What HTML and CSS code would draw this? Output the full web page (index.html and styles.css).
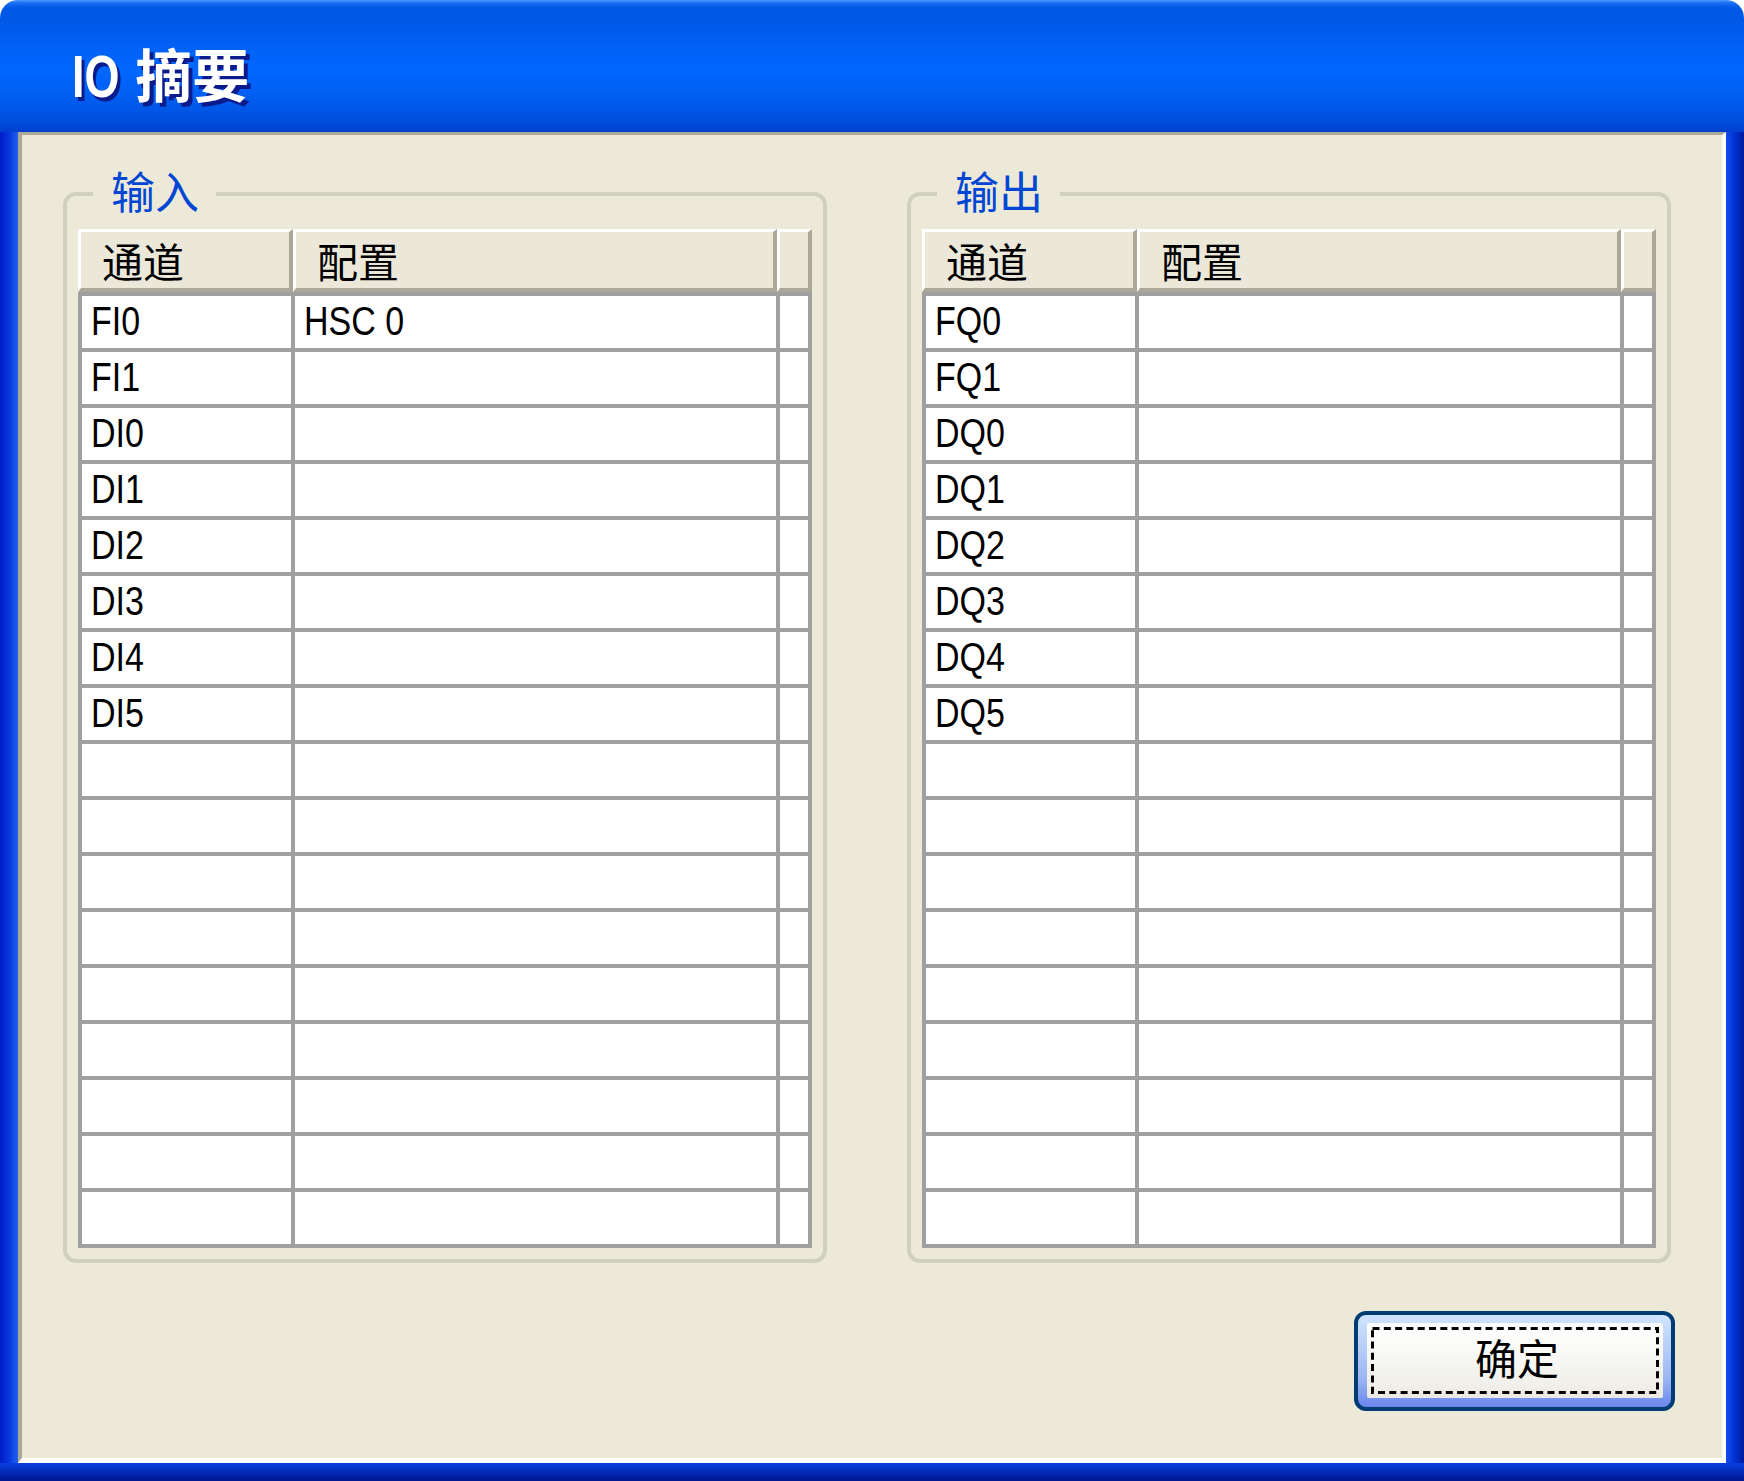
FILE: index.html
```html
<!DOCTYPE html>
<html lang="zh-CN">
<head>
<meta charset="utf-8">
<title>IO 摘要</title>
<link rel="stylesheet" href="styles.css">
</head>
<body>
<div class="window">
  <div class="titlebar">
    <h1 class="title"><span class="latin">IO</span> 摘要</h1>
  </div>
  <div class="frame">
    <div class="client">
      <div class="groups">
        <section class="group">
          <div class="legend">输入</div>
          <div class="table">
            <div class="thead">
              <div class="th">通道</div>
              <div class="th">配置</div>
              <div class="th"></div>
            </div>
            <div class="tbody">
              <div class="tr"><div class="td"><span class="txt">FI0</span></div><div class="td"><span class="txt">HSC 0</span></div><div class="td"></div></div>
              <div class="tr"><div class="td"><span class="txt">FI1</span></div><div class="td"></div><div class="td"></div></div>
              <div class="tr"><div class="td"><span class="txt">DI0</span></div><div class="td"></div><div class="td"></div></div>
              <div class="tr"><div class="td"><span class="txt">DI1</span></div><div class="td"></div><div class="td"></div></div>
              <div class="tr"><div class="td"><span class="txt">DI2</span></div><div class="td"></div><div class="td"></div></div>
              <div class="tr"><div class="td"><span class="txt">DI3</span></div><div class="td"></div><div class="td"></div></div>
              <div class="tr"><div class="td"><span class="txt">DI4</span></div><div class="td"></div><div class="td"></div></div>
              <div class="tr"><div class="td"><span class="txt">DI5</span></div><div class="td"></div><div class="td"></div></div>
              <div class="tr"><div class="td"></div><div class="td"></div><div class="td"></div></div>
              <div class="tr"><div class="td"></div><div class="td"></div><div class="td"></div></div>
              <div class="tr"><div class="td"></div><div class="td"></div><div class="td"></div></div>
              <div class="tr"><div class="td"></div><div class="td"></div><div class="td"></div></div>
              <div class="tr"><div class="td"></div><div class="td"></div><div class="td"></div></div>
              <div class="tr"><div class="td"></div><div class="td"></div><div class="td"></div></div>
              <div class="tr"><div class="td"></div><div class="td"></div><div class="td"></div></div>
              <div class="tr"><div class="td"></div><div class="td"></div><div class="td"></div></div>
              <div class="tr"><div class="td"></div><div class="td"></div><div class="td"></div></div>
            </div>
          </div>
        </section>
        <section class="group">
          <div class="legend">输出</div>
          <div class="table">
            <div class="thead">
              <div class="th">通道</div>
              <div class="th">配置</div>
              <div class="th"></div>
            </div>
            <div class="tbody">
              <div class="tr"><div class="td"><span class="txt">FQ0</span></div><div class="td"></div><div class="td"></div></div>
              <div class="tr"><div class="td"><span class="txt">FQ1</span></div><div class="td"></div><div class="td"></div></div>
              <div class="tr"><div class="td"><span class="txt">DQ0</span></div><div class="td"></div><div class="td"></div></div>
              <div class="tr"><div class="td"><span class="txt">DQ1</span></div><div class="td"></div><div class="td"></div></div>
              <div class="tr"><div class="td"><span class="txt">DQ2</span></div><div class="td"></div><div class="td"></div></div>
              <div class="tr"><div class="td"><span class="txt">DQ3</span></div><div class="td"></div><div class="td"></div></div>
              <div class="tr"><div class="td"><span class="txt">DQ4</span></div><div class="td"></div><div class="td"></div></div>
              <div class="tr"><div class="td"><span class="txt">DQ5</span></div><div class="td"></div><div class="td"></div></div>
              <div class="tr"><div class="td"></div><div class="td"></div><div class="td"></div></div>
              <div class="tr"><div class="td"></div><div class="td"></div><div class="td"></div></div>
              <div class="tr"><div class="td"></div><div class="td"></div><div class="td"></div></div>
              <div class="tr"><div class="td"></div><div class="td"></div><div class="td"></div></div>
              <div class="tr"><div class="td"></div><div class="td"></div><div class="td"></div></div>
              <div class="tr"><div class="td"></div><div class="td"></div><div class="td"></div></div>
              <div class="tr"><div class="td"></div><div class="td"></div><div class="td"></div></div>
              <div class="tr"><div class="td"></div><div class="td"></div><div class="td"></div></div>
              <div class="tr"><div class="td"></div><div class="td"></div><div class="td"></div></div>
            </div>
          </div>
        </section>
      </div>
      <div class="actions">
        <button class="btn" type="button">
          <span class="face">
            <svg class="focus" width="288" height="67" viewBox="0 0 288 67" aria-hidden="true">
              <rect x="1.5" y="1.5" width="285" height="64" fill="none" stroke="#000" stroke-width="3" stroke-dasharray="7 4.3"/>
            </svg>
            <span class="btn-label">确定</span>
          </span>
        </button>
      </div>
    </div>
  </div>
</div>
</body>
</html>
```

FILE: styles.css
```css
html, body {
  margin: 0;
  padding: 0;
  background: #ffffff;
}

.window {
  width: 1744px;
  height: 1481px;
  display: flex;
  flex-direction: column;
  font-family: "Liberation Sans", "Noto Sans CJK SC", sans-serif;
}

.titlebar {
  height: 132px;
  flex: none;
  box-sizing: border-box;
  border-radius: 18px 18px 0 0;
  background: linear-gradient(180deg,
    #4c9bff 0px, #1a6cf3 3px, #0058e6 8px, #0058e6 20px,
    #0062f7 50px, #0067ff 70px, #0060f4 92px, #0056e6 110px,
    #004cdc 122px, #003fcf 132px);
  padding: 49px 0 0 72px;
}

.title {
  margin: 0;
  font-family: "Liberation Sans", "Noto Sans CJK SC", sans-serif;
  font-size: 57px;
  line-height: 56px;
  font-weight: bold;
  color: #ffffff;
  text-shadow: 4px 4px 0 #0b1b8c;
}

.latin {
  display: inline-block;
  font-size: 60px;
  transform: scaleX(0.75);
  transform-origin: 0 50%;
  margin-right: -16px;
}

.frame {
  flex: 1;
  display: flex;
  padding: 0 18px 18px 18px;
  background:
    linear-gradient(180deg, #0a3ee0, #00168f) left bottom / 100% 18px no-repeat,
    linear-gradient(90deg, #001cc8, #0a3be0 55%, #2062ef) left top / 18px 100% no-repeat,
    linear-gradient(90deg, #124ef0, #0030d0 50%, #001a9c) right top / 18px 100% no-repeat,
    #0033d6;
}

.client {
  flex: 1;
  box-sizing: border-box;
  background: #ece9d8;
  border-style: solid;
  border-width: 3px 4px 5px 4px;
  border-color: #aca899 #fcfcfa #fcfcfa #aca899;
  padding: 57px 47px 0 41px;
  display: flex;
  flex-direction: column;
}

.groups {
  display: flex;
  gap: 80px;
}

.group {
  position: relative;
  width: 764px;
  box-sizing: border-box;
  border: 4px solid #d0d0bf;
  border-radius: 13px;
  padding: 33px 11px 11px 11px;
}

.legend {
  position: absolute;
  left: 26px;
  top: -28px;
  padding: 0 17px 0 18px;
  background: #ece9d8;
  font-family: "Noto Sans CJK SC", sans-serif;
  font-size: 44px;
  line-height: 44px;
  color: #0046d5;
}

.table {
  width: 734px;
}

.thead {
  display: grid;
  grid-template-columns: 215px 484px 35px;
  height: 63px;
}

.th {
  box-sizing: border-box;
  border-style: solid;
  border-width: 3px 4px 4px 3px;
  border-color: #ffffff #aca899 #aca899 #ffffff;
  background: #ebe8da;
  padding-left: 21px;
  font-family: "Noto Sans CJK SC", sans-serif;
  font-size: 41px;
  line-height: 56px;
  color: #000000;
  white-space: nowrap;
}

.tbody {
  border-bottom: 4px solid #a0a0a0;
}

.tr {
  display: grid;
  grid-template-columns: 213px 485px 32px;
  box-sizing: border-box;
  height: 56px;
  border-left: 4px solid #a0a0a0;
  border-top: 4px solid #a0a0a0;
}

.td {
  background: #ffffff;
  border-right: 4px solid #a0a0a0;
  padding-left: 9px;
  font-family: "Liberation Sans", sans-serif;
  font-size: 40px;
  line-height: 51px;
  color: #000000;
  white-space: nowrap;
  overflow: hidden;
}

.txt {
  display: inline-block;
  transform: scaleX(0.85);
  transform-origin: 0 50%;
}

.actions {
  display: flex;
  justify-content: flex-end;
  margin-top: 48px;
}

.btn {
  width: 321px;
  height: 100px;
  box-sizing: border-box;
  margin: 0;
  padding: 8px 8px 9px 9px;
  border: 4px solid #003c74;
  border-radius: 12px;
  background: linear-gradient(180deg, #cfe4ff 0%, #b7cff8 35%, #9bb5f2 70%, #6a86ec 100%);
  display: flex;
  cursor: default;
}

.face {
  flex: 1;
  position: relative;
  display: flex;
  align-items: center;
  justify-content: center;
  border-radius: 2px;
  background: linear-gradient(180deg, #ffffff 0%, #f8f8f5 40%, #f1f0ea 80%, #ebe9e1 100%);
}

.focus {
  position: absolute;
  left: 4px;
  top: 4px;
}

.btn-label {
  position: relative;
  font-family: "Noto Sans CJK SC", sans-serif;
  font-size: 42px;
  line-height: 42px;
  color: #000000;
  padding-left: 4px;
  padding-bottom: 7px;
}
```
